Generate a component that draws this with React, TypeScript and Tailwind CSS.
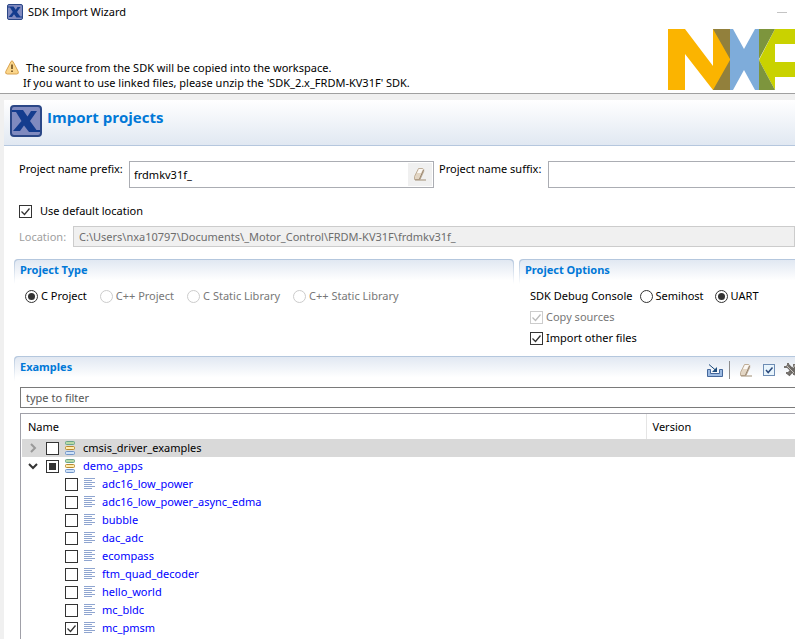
import type { InputHTMLAttributes, ReactNode } from "react";

const examples = [
  "adc16_low_power",
  "adc16_low_power_async_edma",
  "bubble",
  "dac_adc",
  "ecompass",
  "ftm_quad_decoder",
  "hello_world",
  "mc_bldc",
  "mc_pmsm",
];

function XLogo({ className }: { className: string }) {
  return (
    <svg viewBox="0 0 32 32" className={className} aria-hidden="true">
      <rect x="1" y="1" width="30" height="30" rx="3" fill="#808abf" stroke="#2b4787" strokeWidth="2" />
      <path d="M2 5h11l4.500 6.500L21 6h6l-7 10 6.500 9H30v2H19l-5-6.500L10 26H3l8.500-10L6 7H2z" fill="#143c8e" />
    </svg>
  );
}

function NxpLogo() {
  return (
    <svg viewBox="0 0 127 61" className="h-[61px] w-[127px] flex-shrink-0" role="img" aria-label="NXP">
      <path d="M0 0h17l28 37V0h17v61H45L17 25v36H0z" fill="#fbb400" />
      <path d="M62 0h3l11 20L87 0h4v61h-4L76 41 65 61h-3z" fill="#7eacda" />
      <path d="M45 0h17v30z M45 61h17V31z" fill="#92803c" />
      <path d="M107 0h20v15h-20v18h20v15h-20v13L91 31z" fill="#c9d200" />
      <path d="M91 0h16L91 30z M91 61h16L91 31z" fill="#7d953d" />
    </svg>
  );
}

function WarningIcon() {
  return (
    <svg viewBox="0 0 14 15" className="h-[15px] w-[14px] flex-shrink-0" aria-hidden="true">
      <path d="M6 1.5q1-1.4 2 0l5.2 10q.8 2.5-1.5 2.5H2.3Q0 14 .8 11.5z" fill="#fbd68a" stroke="#d9a350" />
      <path d="M6.2 4.5h1.6V9H6.2zM6.2 10.5h1.6v1.6H6.2z" fill="#6d4c1c" />
    </svg>
  );
}

function EraserIcon() {
  return (
    <svg viewBox="0 0 14 13" className="h-[13px] w-[14px]" aria-hidden="true">
      <path d="M5.5.5h4.2l1 1v2L7 11.5H1.5v-3z" fill="#e3d6c4" stroke="#bfae98" />
      <path d="M6 1h4l-2 4H4z" fill="#fbf8f4" />
      <path d="m10.5 2-4 9" stroke="#978570" fill="none" />
      <path d="M2 12h11" stroke="#a08d75" />
    </svg>
  );
}

function CollapseIcon() {
  return (
    <svg viewBox="0 0 16 13" className="h-[13px] w-4" aria-hidden="true">
      <path d="M.5 5.5h3v4h9v-4h3v7H.5z" fill="#9dbbe2" stroke="#45689c" />
      <path d="m2 .5 7 6" stroke="#1d4c7c" fill="none" />
      <path d="M10 3v5H5z" fill="#1d4c7c" />
    </svg>
  );
}

function CheckAllIcon() {
  return (
    <svg viewBox="0 0 12 12" className="h-3 w-3" aria-hidden="true">
      <rect x=".5" y=".5" width="11" height="11" fill="#e8f4fc" stroke="#6d8cb4" />
      <path d="m3 6 2.2 2.5 4.3-5" fill="none" stroke="#2c4a7c" strokeWidth="1.5" />
    </svg>
  );
}

function ToolsIcon() {
  return (
    <svg viewBox="0 0 16 16" className="h-4 w-4" aria-hidden="true">
      <path d="m3 3 10 10M13 3 4 13" stroke="#6b6865" strokeWidth="4" />
      <path d="M0 5h6M4 1v5M9 3h6M9 12h6M2 11h5" stroke="#77736f" strokeWidth="2" />
      <path d="m3 4 7 7M12 2 9 6" stroke="#c5c1bb" />
    </svg>
  );
}

function GroupIcon() {
  return (
    <svg viewBox="0 0 10 14" className="h-[14px] w-[10px]" aria-hidden="true">
      <rect x=".5" y=".5" width="9" height="3" rx="1" fill="#b9dba6" stroke="#6aa58c" />
      <rect x=".5" y="5.5" width="9" height="3" rx="1" fill="#ffedb0" stroke="#b98a2f" />
      <rect x=".5" y="10.5" width="9" height="3" rx="1" fill="#cfe2f8" stroke="#7094c8" />
    </svg>
  );
}

function FileIcon() {
  return (
    <svg viewBox="0 0 12 12" className="h-3 w-3" aria-hidden="true">
      <path d="M0 .5h11M0 2.5h8M0 4.5h11M0 6.5h8M0 8.5h11M0 10.5h8" stroke="#8fa5d0" />
    </svg>
  );
}

type BoxProps = InputHTMLAttributes<HTMLInputElement> & { mixed?: boolean };

function Checkbox({ mixed, ...props }: BoxProps) {
  return (
    <span className="grid h-[13px] w-[13px] flex-shrink-0">
      <input
        type="checkbox"
        className="peer col-start-1 row-start-1 h-[13px] w-[13px] appearance-none border border-[#333] bg-white disabled:border-[#ccc]"
        {...props}
      />
      <svg
        viewBox="0 0 13 13"
        className="pointer-events-none col-start-1 row-start-1 hidden h-[13px] w-[13px] text-[#333] peer-checked:block peer-disabled:text-[#bbb]"
        aria-hidden="true"
      >
        {mixed ? (
          <path d="M3 3h7v7H3z" fill="currentColor" />
        ) : (
          <path d="m2.5 6.5 3 3 5-6" fill="none" stroke="currentColor" strokeWidth="1.3" />
        )}
      </svg>
    </span>
  );
}

function Radio({ label, ...props }: InputHTMLAttributes<HTMLInputElement> & { label: string }) {
  return (
    <label className="flex items-center gap-[3px] whitespace-nowrap has-disabled:text-[#777]">
      <span className="grid h-[13px] w-[13px] flex-shrink-0 place-items-center">
        <input
          type="radio"
          className="peer col-start-1 row-start-1 h-[13px] w-[13px] appearance-none rounded-full border border-[#333] bg-white disabled:border-[#ccc]"
          {...props}
        />
        <span className="pointer-events-none col-start-1 row-start-1 hidden h-[7px] w-[7px] rounded-full bg-[#333] peer-checked:block" />
      </span>
      {label}
    </label>
  );
}

/** Section heading bar whose outline fades out down the sides. */
function SectionHeader({ title, open, children }: { title: string; open?: boolean; children?: ReactNode }) {
  return (
    <div className={`bg-linear-to-b from-[#b3c6dd] to-white pt-px pl-px ${open ? "rounded-tl" : "rounded-t pr-px"}`}>
      <div
        className={`flex h-6 items-start justify-between bg-linear-to-b from-[#e1e8f2] to-white to-85% pl-[5px] ${
          open ? "rounded-tl" : "rounded-t"
        }`}
      >
        <h2 className="pt-[2px] leading-4 font-bold text-[#0078d7]">{title}</h2>
        {children}
      </div>
    </div>
  );
}

function Chevron({ expanded }: { expanded?: boolean }) {
  return (
    <button type="button" className="flex h-4 w-3 items-center justify-center" aria-label={expanded ? "Collapse" : "Expand"}>
      <svg viewBox="0 0 10 10" className={`h-[10px] w-[10px] ${expanded ? "text-[#333]" : "text-[#999]"}`}>
        <path d={expanded ? "m1 3 4 4 4-4" : "m3 1 4 4-4 4"} fill="none" stroke="currentColor" strokeWidth="2" />
      </svg>
    </button>
  );
}

export default function App() {
  return (
    <div className="flex min-h-screen flex-col overflow-hidden bg-[#f0f0f0] font-['Noto_Sans','Open_Sans',sans-serif] text-[11px] leading-4 text-black">
      <header className="border-b border-[#a0a0a0] bg-white">
        <div className="flex h-6 items-center justify-between pr-2 pl-[7px]">
          <div className="flex items-center gap-[5px]">
            <XLogo className="h-4 w-4" />
            <h1>SDK Import Wizard</h1>
          </div>
          <button type="button" aria-label="Minimize" className="flex h-4 items-center">
            <span className="h-px w-[10px] bg-[#c4c4c4]" />
          </button>
        </div>
        <div className="flex items-end justify-between pt-[5px] pb-[3px]">
          <div className="flex gap-1 pl-[5px] leading-[15px]">
            <WarningIcon />
            <div className="whitespace-nowrap">
              <p className="pl-[3px]">The source from the SDK will be copied into the workspace.</p>
              <p>If you want to use linked files, please unzip the 'SDK_2.x_FRDM-KV31F' SDK.</p>
            </div>
          </div>
          <NxpLogo />
        </div>
      </header>

      <main className="mt-[6px] ml-1 flex flex-1 flex-col bg-white">
        <div className="flex h-[46px] items-start gap-[5px] border-b border-[#b5c7de] bg-linear-to-b from-white to-[#e1e8f2] pt-[5px] pl-[6px]">
          <XLogo className="h-8 w-8" />
          <h2 className="font-['Open_Sans',sans-serif] text-[15px] leading-6 font-bold text-[#0078d7]">Import projects</h2>
        </div>

        <div className="flex items-start pt-[15px] pl-[15px]">
          <label htmlFor="prefix" className="w-[110px] flex-shrink-0 whitespace-nowrap">
            Project name prefix:
          </label>
          <div className="flex h-[27px] min-w-0 flex-1 items-center border border-[#abadb3] pr-px">
            <input id="prefix" defaultValue="frdmkv31f_" className="h-full min-w-0 flex-1 px-1 outline-none" />
            <button type="button" aria-label="Clear prefix" className="flex h-[23px] w-6 items-center justify-center bg-[#f0f0f0]">
              <EraserIcon />
            </button>
          </div>
          <label htmlFor="suffix" className="w-[114px] flex-shrink-0 pl-[5px] whitespace-nowrap">
            Project name suffix:
          </label>
          <input id="suffix" className="h-[27px] w-[247px] border border-r-0 border-[#abadb3] px-1 outline-none" />
        </div>

        <label className="mt-[15px] ml-[15px] flex h-4 items-center gap-2 self-start">
          <Checkbox defaultChecked />
          Use default location
        </label>

        <div className="mt-[7px] flex items-center pl-[15px]">
          <label htmlFor="location" className="w-[54px] flex-shrink-0 text-[#a0a0a0]">
            Location:
          </label>
          <input
            id="location"
            disabled
            defaultValue="C:\Users\nxa10797\Documents\_Motor_Control\FRDM-KV31F\frdmkv31f_"
            className="h-[21px] min-w-0 flex-1 border border-[#ccc] bg-[#f0f0f0] px-[5px] text-[#6d6d6d]"
          />
        </div>

        <div className="mt-3 flex gap-[5px] pl-[10px]">
          <section className="min-w-0 flex-1">
            <SectionHeader title="Project Type" />
            <div className="flex h-6 items-center gap-[13px] pl-[11px]">
              <Radio name="type" label="C Project" defaultChecked />
              <Radio name="type" label="C++ Project" disabled />
              <Radio name="type" label="C Static Library" disabled />
              <Radio name="type" label="C++ Static Library" disabled />
            </div>
          </section>
          <section className="w-[276px] flex-shrink-0">
            <SectionHeader title="Project Options" open />
            <div className="flex flex-col gap-[5px] pt-1 pl-[11px]">
              <div className="flex h-4 items-center gap-[7px]">
                <span>SDK Debug Console</span>
                <div className="flex gap-[11px]">
                  <Radio name="console" label="Semihost" />
                  <Radio name="console" label="UART" defaultChecked />
                </div>
              </div>
              <label className="flex h-4 items-center gap-[3px] text-[#777]">
                <Checkbox defaultChecked disabled />
                Copy sources
              </label>
              <label className="flex h-4 items-center gap-[3px]">
                <Checkbox defaultChecked />
                Import other files
              </label>
            </div>
          </section>
        </div>

        <section className="mt-[10px] flex flex-1 flex-col pl-[10px]">
          <SectionHeader title="Examples" open>
            <div className="flex h-[26px] items-center">
              <button type="button" aria-label="Collapse all">
                <CollapseIcon />
              </button>
              <span className="mx-[6px] h-[18px] w-px bg-[#8c8c8c]" />
              <button type="button" aria-label="Clear selection" className="ml-[3px]">
                <EraserIcon />
              </button>
              <button type="button" aria-label="Select all" className="ml-[10px]">
                <CheckAllIcon />
              </button>
              <button type="button" aria-label="Settings" className="ml-[9px] w-[11px] overflow-hidden">
                <ToolsIcon />
              </button>
            </div>
          </SectionHeader>
          <div className="flex flex-1 flex-col pt-[6px] pl-[6px]">
            <input
              aria-label="Filter examples"
              placeholder="type to filter"
              className="h-[21px] border border-r-0 border-[#7a7a7a] px-[5px] outline-none placeholder:text-[#555]"
            />
            <div className="mt-[5px] flex-1 border-t border-l border-[#a0a0a8] pl-px">
              <table className="w-full table-fixed border-collapse">
                <thead>
                  <tr className="h-[25px] text-left">
                    <th className="border-r border-[#e5e5e5] pl-[6px] font-normal">Name</th>
                    <th className="w-[149px] pl-[6px] font-normal">Version</th>
                  </tr>
                </thead>
                <tbody>
                  <tr className="h-[18px] bg-[#d9d9d9]">
                    <td colSpan={2} className="p-0">
                      <div className="flex h-[18px] items-center pl-[5px]">
                        <Chevron />
                        <label className="flex items-center pl-[7px]">
                          <Checkbox />
                          <span className="px-[6px]">
                            <GroupIcon />
                          </span>
                          <span className="pl-[2px]">cmsis_driver_examples</span>
                        </label>
                      </div>
                    </td>
                  </tr>
                  <tr className="h-[18px]">
                    <td colSpan={2} className="p-0 text-[#0000ff]">
                      <div className="flex h-[18px] items-center pl-[5px]">
                        <Chevron expanded />
                        <label className="flex items-center pl-[7px]">
                          <Checkbox mixed defaultChecked />
                          <span className="px-[6px]">
                            <GroupIcon />
                          </span>
                          <span className="pl-[2px]">demo_apps</span>
                        </label>
                      </div>
                    </td>
                  </tr>
                  {examples.map((name) => (
                    <tr key={name} className="h-[18px]">
                      <td colSpan={2} className="p-0 text-[#0000ff]">
                        <label className="flex h-[18px] items-center gap-[6px] pl-[43px]">
                          <Checkbox defaultChecked={name === "mc_pmsm"} />
                          <FileIcon />
                          {name}
                        </label>
                      </td>
                    </tr>
                  ))}
                </tbody>
              </table>
            </div>
          </div>
        </section>
      </main>
    </div>
  );
}
